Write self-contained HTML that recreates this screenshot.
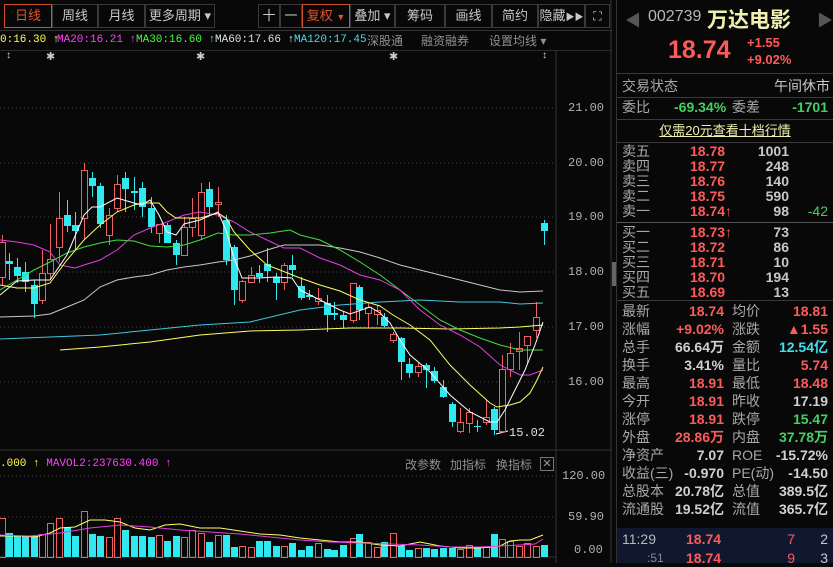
<!DOCTYPE html>
<html><head><meta charset="utf-8"><style>
*{margin:0;padding:0;box-sizing:border-box}
body{width:833px;height:563px;background:#080808;overflow:hidden;position:relative;font-family:"Liberation Sans","Noto Sans CJK SC",sans-serif;color:#c8c8c8}
.a{position:absolute;white-space:nowrap}
.btn{position:absolute;top:4px;height:24px;border:1px solid #3a3a3a;font-size:13px;line-height:22px;text-align:center;color:#c8c8c8}
.m{font-family:"Liberation Mono","Noto Sans CJK SC",monospace;font-size:11px}
.r{color:#ff5a5a}.g{color:#44d060}.cy{color:#40e0f0}
.row{position:absolute;left:622px;width:208px;height:18px;font-size:14px;line-height:18px}
.row span{position:absolute}
.hl{position:absolute;left:617px;width:216px;height:1px;background:#3a3a3a}
</style></head><body>
<div class="a" style="left:0;top:0;width:612px;height:31px;border-bottom:1px solid #333"></div>
<div class="btn" style="left:4px;width:48px;border-color:#d0502a;color:#e8502a">日线</div>
<div class="btn" style="left:52px;width:46px">周线</div>
<div class="btn" style="left:98px;width:47px">月线</div>
<div class="btn" style="left:145px;width:70px">更多周期 ▾</div>
<div class="btn" style="left:258px;width:22px">十</div>
<div class="btn" style="left:280px;width:22px">一</div>
<div class="btn" style="left:302px;width:48px;border-color:#d0502a;color:#e8502a">复权 <span style="font-size:9px">▼</span></div>
<div class="btn" style="left:350px;width:45px">叠加 ▾</div>
<div class="btn" style="left:395px;width:50px">筹码</div>
<div class="btn" style="left:445px;width:47px">画线</div>
<div class="btn" style="left:492px;width:46px">简约</div>
<div class="btn" style="left:538px;width:47px">隐藏<span style="font-size:9px">▶▶</span></div>
<div class="btn" style="left:585px;width:25px;font-size:12px">⛶</div>
<div class="a m" style="left:0;top:34px;color:#ffff50">0:16.30 ↑</div>
<div class="a m" style="left:57px;top:34px;color:#ff40ff">MA20:16.21 ↑</div>
<div class="a m" style="left:136px;top:34px;color:#40ff40">MA30:16.60 ↑</div>
<div class="a m" style="left:215px;top:34px;color:#e0e0e0">MA60:17.66 ↑</div>
<div class="a m" style="left:294px;top:34px;color:#40e0f0">MA120:17.45</div>
<div class="a" style="left:367px;top:32px;font-size:12px;color:#909090">深股通</div>
<div class="a" style="left:421px;top:32px;font-size:12px;color:#909090">融资融券</div>
<div class="a" style="left:489px;top:32px;font-size:12px;color:#909090">设置均线 ▾</div>
<div class="a" style="left:0;top:50px;width:612px;height:1px;background:#2a2a2a"></div>
<div class="a" style="left:6px;top:50px;font-size:10px;color:#ccc">↕</div>
<div class="a" style="left:46px;top:50px;font-size:11px;color:#ccc">✱</div>
<div class="a" style="left:196px;top:50px;font-size:11px;color:#ccc">✱</div>
<div class="a" style="left:389px;top:50px;font-size:11px;color:#ccc">✱</div>
<div class="a" style="left:542px;top:50px;font-size:10px;color:#ccc">↕</div>
<div class="a m" style="left:568px;top:101px;color:#b0b0b0;font-size:12px">21.00</div>
<div class="a m" style="left:568px;top:156px;color:#b0b0b0;font-size:12px">20.00</div>
<div class="a m" style="left:568px;top:210px;color:#b0b0b0;font-size:12px">19.00</div>
<div class="a m" style="left:568px;top:265px;color:#b0b0b0;font-size:12px">18.00</div>
<div class="a m" style="left:568px;top:320px;color:#b0b0b0;font-size:12px">17.00</div>
<div class="a m" style="left:568px;top:375px;color:#b0b0b0;font-size:12px">16.00</div>
<div class="a m" style="left:562px;top:469px;color:#b0b0b0;font-size:12px">120.00</div>
<div class="a m" style="left:568px;top:510px;color:#b0b0b0;font-size:12px">59.90</div>
<div class="a m" style="left:574px;top:543px;color:#b0b0b0;font-size:12px">0.00</div>
<div class="a m" style="left:0;top:458px;color:#ffff50">.000 ↑ <span style="color:#ff40ff">MAVOL2:237630.400 ↑</span></div>
<div class="a" style="left:405px;top:456px;font-size:12px;color:#909090">改参数</div>
<div class="a" style="left:450px;top:456px;font-size:12px;color:#909090">加指标</div>
<div class="a" style="left:496px;top:456px;font-size:12px;color:#909090">换指标</div>
<div class="a" style="left:540px;top:457px;width:14px;height:14px;border:1px solid #777;font-size:11px;line-height:12px;text-align:center;color:#999">✕</div>
<div class="a m" style="left:509px;top:426px;color:#e0e0e0;font-size:12px">15.02</div>
<svg class="a" style="left:0;top:0" width="617" height="563">
<g stroke="#444" stroke-dasharray="1,3">
<line x1="0" y1="108" x2="556" y2="108"/><line x1="0" y1="163" x2="556" y2="163"/><line x1="0" y1="217" x2="556" y2="217"/><line x1="0" y1="272" x2="556" y2="272"/><line x1="0" y1="327" x2="556" y2="327"/><line x1="0" y1="382" x2="556" y2="382"/>
<line x1="0" y1="476" x2="556" y2="476"/><line x1="0" y1="517" x2="556" y2="517"/>
</g>
<line x1="556" y1="50" x2="556" y2="563" stroke="#333"/>
<line x1="0" y1="450" x2="612" y2="450" stroke="#333"/>
<line x1="611" y1="0" x2="611" y2="563" stroke="#333"/>
<rect x="612" y="262" width="4" height="24" fill="#666"/>
<line x1="0" y1="557" x2="556" y2="557" stroke="#333"/>
<line x1="496" y1="434" x2="508" y2="431" stroke="#fff"/>
<g id="cd"></g>
<g fill="none" stroke-width="1">
<polyline stroke="#ffff60" points="60,350 100,347 150,342 200,335 250,331 300,330 350,328 400,328 450,329 500,328 520,327 543,325"/>
<polyline stroke="#40c8e0" points="0,339 50,337 100,335 150,330 200,325 250,322 300,310 340,305 380,302 420,300 460,302 500,302 520,304 543,303"/>
<polyline stroke="#c8c8c8" points="0,317 34,316 50,314 67,307 84,300 100,287 117,280 134,277 150,275 167,270 184,267 200,265 218,262 234,260 250,256 267,250 284,245 300,245 320,245 340,248 360,252 380,258 400,265 420,270 440,275 460,280 480,285 500,290 520,292 543,291"/>
<polyline stroke="#40e040" points="0,290 17,280 34,270 50,262 67,253 84,247 100,243 117,240 134,241 150,246 167,247 184,245 200,240 218,233 234,235 250,235 270,233 290,230 300,235 320,240 340,250 360,262 380,275 400,290 420,305 440,320 460,330 480,338 500,345 520,350 543,350"/>
<polyline stroke="#e040e0" points="0,240 17,242 34,245 50,252 60,265 75,268 84,265 100,260 117,250 134,235 150,228 167,222 184,215 200,212 218,215 234,222 250,232 267,240 284,248 300,248 320,258 340,265 360,275 380,280 400,290 420,310 440,325 460,335 480,347 500,365 510,370 520,375 530,375 543,370"/>
<polyline stroke="#ffff60" points="0,285 17,288 34,288 50,283 67,260 84,240 100,225 117,212 134,205 142,203 159,203 167,212 176,218 200,218 218,213 226,218 234,232 250,250 267,265 280,270 300,278 320,285 340,291 360,300 380,306 393,315 410,325 430,340 450,365 470,385 490,403 497,407 510,405 520,402 530,393 537,380 543,367"/>
<polyline stroke="#ffffff" points="0,295 17,281 34,280 50,280 67,255 84,215 92,207 100,207 117,198 134,203 142,205 150,200 159,215 167,232 176,235 184,224 200,220 218,212 226,230 234,258 242,278 259,278 276,277 292,278 300,290 320,300 340,310 350,314 370,307 380,313 390,323 400,340 410,355 430,372 450,395 470,412 490,422 497,422 505,410 515,390 525,370 535,345 543,322"/>
<polyline stroke="#ffff60" points="0,536 20,536 35,537 50,533 60,528 75,527 90,520 105,520 120,522 135,528 150,530 165,525 180,524 200,528 220,528 240,531 260,534 280,535 300,538 320,540 340,542 360,542 380,545 400,546 420,542 440,546 460,548 480,548 500,546 510,541 520,540 530,540 543,535"/>
<polyline stroke="#e040e0" points="0,535 30,536 60,533 90,528 120,525 150,527 180,530 210,532 240,534 270,537 300,540 330,542 360,543 390,544 420,545 450,547 480,547 500,546 520,545 535,544 543,539"/>
</g>
</svg>
<script>
var C=[[2,'r',242,277,235,285],[9,'c',261,264,253,280],[17,'c',267,276,258,283],[25,'c',272,282,262,292],[34,'c',285,304,280,318],[42,'r',273,300,250,304],[50,'r',259,273,224,280],[59,'r',218,247,192,262],[67,'c',215,226,200,232],[75,'c',225,231,212,250],[84,'r',170,218,163,240],[92,'c',178,186,172,197],[100,'c',186,224,183,228],[109,'r',215,235,208,245],[117,'r',184,208,175,212],[125,'c',178,189,172,212],[134,'c',191,193,177,210],[142,'c',188,207,182,217],[151,'c',208,227,197,233],[159,'r',224,233,224,243],[167,'c',225,243,223,243],[176,'c',243,255,240,265],[184,'r',227,255,217,255],[192,'r',218,227,198,237],[201,'r',192,235,183,240],[209,'c',189,207,182,215],[218,'r',202,204,187,217],[226,'c',220,260,215,265],[234,'c',247,290,245,305],[242,'r',281,300,280,303],[251,'r',275,282,267,283],[259,'c',273,277,265,283],[267,'c',264,271,248,282],[276,'c',277,283,273,300],[284,'r',265,282,263,290],[292,'c',265,270,255,277],[301,'c',286,298,277,300],[309,'c',295,297,290,300],[318,'r',298,301,288,305],[327,'c',303,315,295,332],[334,'c',313,315,302,320],[343,'c',315,320,312,328],[353,'r',283,320,283,323],[359,'c',287,310,285,320],[368,'r',307,313,303,328],[377,'r',310,314,305,325],[384,'c',317,326,313,327],[393,'r',334,340,332,343],[401,'c',338,362,337,380],[409,'c',364,373,358,378],[418,'r',366,372,363,377],[426,'c',365,370,363,388],[434,'c',371,381,367,383],[443,'c',387,397,380,398],[452,'c',404,422,402,427],[460,'r',422,431,408,433],[469,'r',412,423,408,433],[477,'c',426,427,420,432],[486,'r',417,422,400,425],[494,'c',409,430,407,435],[502,'r',369,431,355,433],[510,'r',353,369,343,377],[519,'r',348,351,332,370],[527,'r',336,345,336,363],[536,'r',317,330,302,338],[544,'c',223,231,220,245]];
var V=[210,255,265,263,265,258,225,210,238,265,188,258,263,268,210,245,263,265,268,260,278,265,268,245,255,282,262,262,298,295,298,280,278,295,293,285,305,295,285,302,305,290,270,258,282,298,282,255,295,305,300,300,302,300,300,302,290,298,298,258,272,280,295,285,295,290,187];
var s='';
C.forEach(function(c,i){var x=c[0],col=c[1]=='r'?'#f06060':'#30e8f0';var h=Math.max(1,c[3]-c[2]);
s+='<line x1="'+(x+.5)+'" y1="'+c[4]+'" x2="'+(x+.5)+'" y2="'+c[5]+'" stroke="'+col+'"/>';
if(c[1]=='r')s+='<rect x="'+(x-3+.5)+'" y="'+(c[2]+.5)+'" width="6" height="'+h+'" fill="#080808" stroke="'+col+'"/>';
else s+='<rect x="'+(x-3)+'" y="'+c[2]+'" width="7" height="'+h+'" fill="'+col+'"/>';
var vt=Math.round(448+(V[i]||290)/3),vh=557-vt;
if(c[1]=='r')s+='<rect x="'+(x-3+.5)+'" y="'+(vt+.5)+'" width="6" height="'+vh+'" fill="none" stroke="'+col+'"/>';
else s+='<rect x="'+(x-3)+'" y="'+vt+'" width="7" height="'+vh+'" fill="'+col+'"/>';});
document.getElementById('cd').innerHTML=s;
</script>
<div class="a" style="left:616px;top:0;width:1px;height:563px;background:#333"></div>
<div class="a" style="left:625px;top:7px;font-size:16px;color:#555">◀</div>
<div class="a" style="left:817px;top:7px;font-size:16px;color:#555">▶</div>
<div class="a" style="left:648px;top:8px;font-size:16px;color:#b8b8b8">002739</div>
<div class="a" style="left:707px;top:4px;font-size:21px;font-weight:bold;color:#f0f0b0">万达电影</div>
<div class="a r" style="left:668px;top:36px;font-size:25px;font-weight:bold">18.74</div>
<div class="a r" style="left:747px;top:35px;font-size:13px;font-weight:bold">+1.55</div>
<div class="a r" style="left:747px;top:52px;font-size:13px;font-weight:bold">+9.02%</div>
<div class="hl" style="top:73px"></div>
<div class="row" style="top:77px"><span style="left:0;color:#a8a8a8">交易状态</span><span style="right:0;color:#c8c8c8">午间休市</span></div>
<div class="hl" style="top:97px"></div>
<div class="row" style="top:98px"><span style="left:0;color:#a8a8a8">委比</span><span class="g" style="left:52px;font-weight:bold">-69.34%</span><span style="left:110px;color:#a8a8a8">委差</span><span class="g" style="right:2px;font-weight:bold">-1701</span></div>
<div class="hl" style="top:119px"></div>
<div class="row" style="top:122px;text-align:center;left:617px;width:216px;color:#f0f0b0;text-decoration:underline;font-size:13px">仅需20元查看十档行情</div>
<div class="hl" style="top:142px"></div>
<div id="ob"></div>
<div class="hl" style="top:222px;background:#555"></div>
<div class="hl" style="top:300px"></div>
<div id="st"></div>
<div class="a" style="left:617px;top:528px;width:216px;height:35px;background:#101830"></div>
<div class="row" style="top:530px"><span style="left:0;color:#b8b8b8">11:29</span><span class="r" style="left:64px;font-weight:bold">18.74</span><span class="r" style="right:35px">7</span><span style="right:2px;color:#c8c8c8">2</span></div>
<div class="row" style="top:549px"><span style="left:25px;color:#888;font-size:12px">:51</span><span class="r" style="left:64px;font-weight:bold">18.74</span><span class="r" style="right:35px">9</span><span style="right:2px;color:#c8c8c8">3</span></div>
<script>
var ob=[['卖五','18.78','1001',''],['卖四','18.77','248',''],['卖三','18.76','140',''],['卖二','18.75','590',''],['卖一','18.74↑','98','-42'],['买一','18.73↑','73',''],['买二','18.72','86',''],['买三','18.71','10',''],['买四','18.70','194',''],['买五','18.69','13','']];
var h='';ob.forEach(function(o,i){var t=144+i*15+(i>=5?6:0);h+='<div class="row" style="top:'+t+'px;height:15px;line-height:15px"><span style="left:0;color:#a8a8a8">'+o[0]+'</span><span class="r" style="left:68px;font-weight:bold">'+o[1]+'</span><span style="right:41px;color:#c8c8c8;font-weight:bold">'+o[2]+'</span><span class="g" style="right:2px">'+o[3]+'</span></div>';});
document.getElementById('ob').innerHTML=h;
var st=[['最新','18.74','r','均价','18.81','r'],['涨幅','+9.02%','r','涨跌','▲1.55','r'],['总手','66.64万','w','金额','12.54亿','cy'],['换手','3.41%','w','量比','5.74','r'],['最高','18.91','r','最低','18.48','r'],['今开','18.91','r','昨收','17.19','w'],['涨停','18.91','r','跌停','15.47','g'],['外盘','28.86万','r','内盘','37.78万','g'],['净资产','7.07','w','ROE','-15.72%','w'],['收益(三)','-0.970','w','PE(动)','-14.50','w'],['总股本','20.78亿','w','总值','389.5亿','w'],['流通股','19.52亿','w','流值','365.7亿','w']];
h='';st.forEach(function(o,i){var t=302+i*18;h+='<div class="row" style="top:'+t+'px"><span style="left:0;color:#a8a8a8">'+o[0]+'</span><span class="'+o[2]+'" style="right:106px;font-weight:bold;'+(o[2]=='w'?'color:#d0d0d0':'')+'">'+o[1]+'</span><span style="left:110px;color:#a8a8a8">'+o[3]+'</span><span class="'+o[5]+'" style="right:2px;font-weight:bold;'+(o[5]=='w'?'color:#d0d0d0':'')+'">'+o[4]+'</span></div>';});
document.getElementById('st').innerHTML=h;
</script>
</body></html>
